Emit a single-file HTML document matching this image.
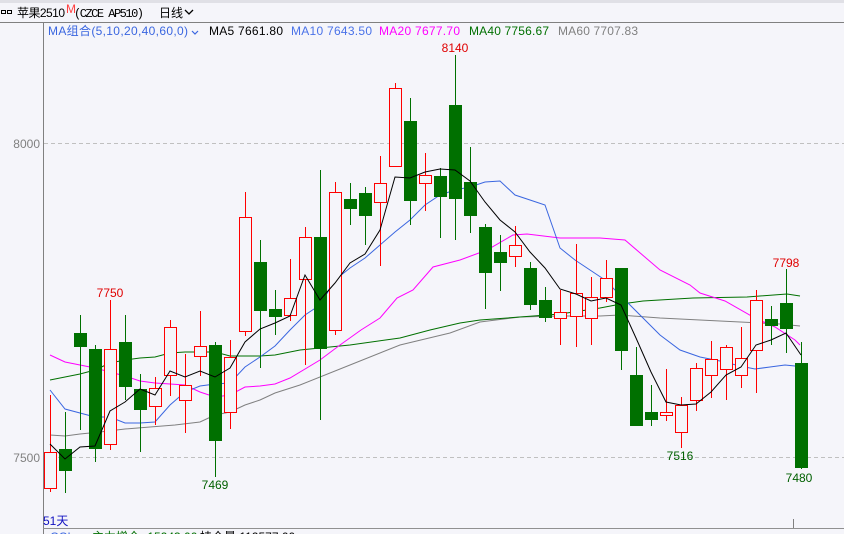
<!DOCTYPE html>
<html><head><meta charset="utf-8"><style>
html,body{margin:0;padding:0;background:#f5f5fa;width:844px;height:534px;overflow:hidden}
svg{display:block}
text{font-family:"Liberation Sans","Noto Sans CJK SC",sans-serif;font-size:12px}
</style></head><body>
<svg width="844" height="534" viewBox="0 0 844 534" xmlns="http://www.w3.org/2000/svg">
<rect x="0" y="0" width="844" height="534" fill="#f5f5fa"/>
<rect x="0" y="0" width="844" height="3" fill="#e0e0e6"/>
<line x1="0" y1="22.5" x2="844" y2="22.5" stroke="#808080"/>
<line x1="43.5" y1="22" x2="43.5" y2="534" stroke="#808080"/>
<line x1="43" y1="528.5" x2="844" y2="528.5" stroke="#909090"/>
<!-- top bar -->
<g fill="none" stroke="#000" stroke-width="1"><rect x="1.5" y="10.5" width="4" height="3"/><rect x="7.5" y="10.5" width="4" height="3"/></g>
<text x="17" y="17" font-size="13" fill="#000" textLength="48">苹果2510</text>
<text x="66" y="13" font-size="8" fill="#ff4040">M</text>
<text x="74" y="17" font-size="12" fill="#000" textLength="70" style="font-family:'Liberation Mono','Noto Sans CJK SC',monospace">(CZCE AP510)</text>
<text x="159" y="17" font-size="13" fill="#000">日线</text>
<polyline points="185,10 189,14 193,10" fill="none" stroke="#000" stroke-width="1.3"/>
<!-- legend -->
<text x="48" y="35" font-size="13" fill="#3a66e0" textLength="140">MA组合(5,10,20,40,60,0)</text>
<polyline points="192,31 195,34 198,31" fill="none" stroke="#3a66e0" stroke-width="1.2"/>
<text x="209" y="35" font-size="13" fill="#000" textLength="74">MA5 7661.80</text>
<text x="291" y="35" font-size="13" fill="#4a72e8" textLength="81">MA10 7643.50</text>
<text x="379" y="35" font-size="13" fill="#ff00ff" textLength="81">MA20 7677.70</text>
<text x="469" y="35" font-size="13" fill="#007000" textLength="80">MA40 7756.67</text>
<text x="558" y="35" font-size="13" fill="#808080" textLength="80">MA60 7707.83</text>
<!-- grid -->
<line x1="44" y1="143.5" x2="844" y2="143.5" stroke="#c0c0c0" stroke-dasharray="4,3"/>
<line x1="44" y1="457.5" x2="844" y2="457.5" stroke="#c0c0c0" stroke-dasharray="4,3"/>
<text x="40" y="148" text-anchor="end" fill="#808080">8000</text>
<text x="40" y="462" text-anchor="end" fill="#808080">7500</text>
<!-- MA60 -->
<polyline fill="none" stroke="#808080" points="50,435 65,436 80,434 100,432 125,429 150,427 175,425 200,422 215,415 230,412 245,405 260,400 275,393 300,385 350,365 400,345 450,333 480,322 520,317 560,316 600,316 620,315 660,318 720,321 780,324 800,326"/>
<!-- MA40 -->
<polyline fill="none" stroke="#007000" points="50,380 65,377 80,374 95,370 110,363 125,360 140,358 155,357 170,353 185,352 215,352 230,356 260,356 275,355 300,350 350,345 400,338 430,330 460,323 480,320 560,314 600,308 621,304 643,301 693,298 747,297 787,294 800,296"/>
<!-- MA20 -->
<polyline fill="none" stroke="#ff00ff" points="50,355 65,362 80,365 95,368 110,372 125,376 140,381 155,383 170,384 185,385 200,392 215,397 230,395 245,387 260,386 275,384 290,378 320,360 340,345 361,330 380,318 397,298 413,290 433,267 460,260 487,250 513,235 527,234 560,238 600,238 625,240 660,270 690,285 700,293 725,301 755,318 775,327 795,340 800,345"/>
<!-- MA10 -->
<polyline fill="none" stroke="#3a66e0" points="50,390 65,409 80,413 95,417 110,417 125,423 140,423 155,422 170,405 185,392 200,386 215,384 230,383 245,367 260,357 275,346 290,330 305,315 320,305 335,280 350,268 365,258 380,245 395,232 410,220 425,205 440,195 455,190 470,187 485,182 500,181 515,195 530,200 545,205 560,248 575,260 590,270 605,280 620,295 640,315 660,335 680,350 700,357 720,361 740,366 755,369 770,367 785,365 795,366 801,368"/>
<g stroke="#ff0000" fill="#f5f5fa">
<line x1="50.5" y1="395" x2="50.5" y2="492"/><rect x="44.5" y="452.5" width="12" height="36"/>
<line x1="110.5" y1="300" x2="110.5" y2="450"/><rect x="104.5" y="349.5" width="12" height="95"/>
<line x1="155.5" y1="377" x2="155.5" y2="425"/><rect x="149.5" y="388.5" width="12" height="18"/>
<line x1="170.5" y1="320" x2="170.5" y2="396"/><rect x="164.5" y="327.5" width="12" height="48"/>
<line x1="185.5" y1="354" x2="185.5" y2="433"/><rect x="179.5" y="385.5" width="12" height="15"/>
<line x1="200.5" y1="311" x2="200.5" y2="376"/><rect x="194.5" y="346.5" width="12" height="10"/>
<line x1="230.5" y1="340" x2="230.5" y2="429"/><rect x="224.5" y="357.5" width="12" height="55"/>
<line x1="245.5" y1="192" x2="245.5" y2="336"/><rect x="239.5" y="217.5" width="12" height="114"/>
<line x1="290.5" y1="259" x2="290.5" y2="321"/><rect x="284.5" y="298.5" width="12" height="17"/>
<line x1="305.5" y1="227" x2="305.5" y2="365"/><rect x="299.5" y="237.5" width="12" height="42"/>
<line x1="335.5" y1="182" x2="335.5" y2="335"/><rect x="329.5" y="192.5" width="12" height="138"/>
<line x1="380.5" y1="156" x2="380.5" y2="266"/><rect x="374.5" y="183.5" width="12" height="19"/>
<line x1="395.5" y1="83" x2="395.5" y2="166"/><rect x="389.5" y="88.5" width="12" height="78"/>
<line x1="425.5" y1="153" x2="425.5" y2="211"/><rect x="419.5" y="175.5" width="12" height="8"/>
<line x1="515.5" y1="226" x2="515.5" y2="267"/><rect x="509.5" y="245.5" width="12" height="11"/>
<line x1="560.5" y1="290" x2="560.5" y2="345"/><rect x="554.5" y="312.5" width="12" height="6"/>
<line x1="576.5" y1="244" x2="576.5" y2="347"/><rect x="570.5" y="293.5" width="12" height="23"/>
<line x1="591.5" y1="277" x2="591.5" y2="345"/><rect x="585.5" y="297.5" width="12" height="21"/>
<line x1="606.5" y1="260" x2="606.5" y2="302"/><rect x="600.5" y="278.5" width="12" height="19"/>
<line x1="666.5" y1="369" x2="666.5" y2="421"/><rect x="660.5" y="412.5" width="12" height="3"/>
<line x1="681.5" y1="397" x2="681.5" y2="448"/><rect x="675.5" y="405.5" width="12" height="27"/>
<line x1="696.5" y1="363" x2="696.5" y2="411"/><rect x="690.5" y="368.5" width="12" height="32"/>
<line x1="711.5" y1="341" x2="711.5" y2="398"/><rect x="705.5" y="359.5" width="12" height="16"/>
<line x1="726.5" y1="345" x2="726.5" y2="400"/><rect x="720.5" y="347.5" width="12" height="22"/>
<line x1="741.5" y1="327" x2="741.5" y2="388"/><rect x="735.5" y="358.5" width="12" height="17"/>
<line x1="756.5" y1="290" x2="756.5" y2="393"/><rect x="750.5" y="300.5" width="12" height="50"/>
</g>
<g stroke="#007000" fill="#007000">
<line x1="65.5" y1="412" x2="65.5" y2="493"/><rect x="59.5" y="449.5" width="12" height="21"/>
<line x1="80.5" y1="315" x2="80.5" y2="430"/><rect x="74.5" y="333.5" width="12" height="13"/>
<line x1="95.5" y1="345" x2="95.5" y2="462"/><rect x="89.5" y="349.5" width="12" height="99"/>
<line x1="125.5" y1="315" x2="125.5" y2="400"/><rect x="119.5" y="342.5" width="12" height="44"/>
<line x1="140.5" y1="374" x2="140.5" y2="452"/><rect x="134.5" y="389.5" width="12" height="20"/>
<line x1="215.5" y1="342" x2="215.5" y2="477"/><rect x="209.5" y="345.5" width="12" height="95"/>
<line x1="260.5" y1="240" x2="260.5" y2="368"/><rect x="254.5" y="262.5" width="12" height="48"/>
<line x1="275.5" y1="290" x2="275.5" y2="335"/><rect x="269.5" y="309.5" width="12" height="7"/>
<line x1="320.5" y1="170" x2="320.5" y2="420"/><rect x="314.5" y="237.5" width="12" height="111"/>
<line x1="350.5" y1="183" x2="350.5" y2="225"/><rect x="344.5" y="199.5" width="12" height="9"/>
<line x1="365.5" y1="187" x2="365.5" y2="245"/><rect x="359.5" y="193.5" width="12" height="22"/>
<line x1="410.5" y1="98" x2="410.5" y2="225"/><rect x="404.5" y="121.5" width="12" height="79"/>
<line x1="440.5" y1="168" x2="440.5" y2="238"/><rect x="434.5" y="176.5" width="12" height="20"/>
<line x1="455.5" y1="55" x2="455.5" y2="240"/><rect x="449.5" y="105.5" width="12" height="93"/>
<line x1="470.5" y1="147" x2="470.5" y2="233"/><rect x="464.5" y="182.5" width="12" height="33"/>
<line x1="485.5" y1="224" x2="485.5" y2="309"/><rect x="479.5" y="227.5" width="12" height="45"/>
<line x1="500.5" y1="235" x2="500.5" y2="291"/><rect x="494.5" y="252.5" width="12" height="10"/>
<line x1="530.5" y1="262" x2="530.5" y2="310"/><rect x="524.5" y="268.5" width="12" height="36"/>
<line x1="545.5" y1="287" x2="545.5" y2="322"/><rect x="539.5" y="300.5" width="12" height="17"/>
<line x1="621.5" y1="268" x2="621.5" y2="370"/><rect x="615.5" y="268.5" width="12" height="82"/>
<line x1="636.5" y1="347" x2="636.5" y2="425"/><rect x="630.5" y="375.5" width="12" height="50"/>
<line x1="651.5" y1="385" x2="651.5" y2="426"/><rect x="645.5" y="412.5" width="12" height="7"/>
<line x1="771.5" y1="306" x2="771.5" y2="345"/><rect x="765.5" y="319.5" width="12" height="6"/>
<line x1="786.5" y1="269" x2="786.5" y2="353"/><rect x="780.5" y="303.5" width="12" height="25"/>
<line x1="801.5" y1="342" x2="801.5" y2="469"/><rect x="795.5" y="363.5" width="12" height="104"/>
</g>
<!-- MA5 -->
<polyline fill="none" stroke="#000" points="50,444 65,459 80,447 95,446 110,411 125,402 140,389 155,395 170,371 185,377 200,371 215,377 230,368 245,342 260,329 275,323 290,316 305,275 320,300 335,283 350,263 365,254 380,230 395,177 410,178 425,172 440,169 455,170 470,181 485,202 500,220 515,232 530,252 545,268 560,289 576,294 591,301 606,298 621,305 636,338 651,372 666,402 681,405 696,404 711,392 726,375 741,367 756,345 771,340 786,333 801,355"/>
<!-- labels -->
<text x="455" y="52" text-anchor="middle" fill="#e00000">8140</text>
<text x="110" y="297" text-anchor="middle" fill="#e00000">7750</text>
<text x="786" y="267" text-anchor="middle" fill="#e00000">7798</text>
<text x="215" y="489" text-anchor="middle" fill="#006000">7469</text>
<text x="680" y="460" text-anchor="middle" fill="#006000">7516</text>
<text x="799" y="482" text-anchor="middle" fill="#006000">7480</text>
<text x="43" y="525" fill="#1010c0">51天</text>
<line x1="793.5" y1="519" x2="793.5" y2="528" stroke="#808080"/>
<!-- cut-off bottom row -->
<text x="50" y="541" fill="#3a66e0">CCI</text>
<text x="92" y="541" fill="#007000">主力增仓 -15243.00</text>
<text x="200" y="541" fill="#000">持仓量 112577.00</text>
</svg>
</body></html>
